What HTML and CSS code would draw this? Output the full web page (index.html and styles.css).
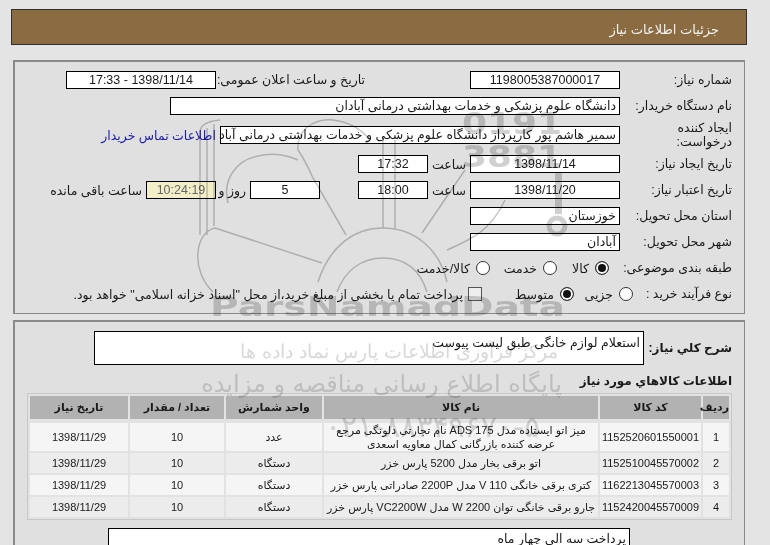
FILE: index.html
```html
<!DOCTYPE html>
<html lang="fa" dir="rtl">
<head>
    <meta charset="UTF-8">
    <title>جزئیات اطلاعات نیاز</title>
    <link rel="stylesheet" href="styles.css">
</head>
<body>
<div class="title-bar">جزئیات اطلاعات نیاز</div>

<div class="panel panel-top">
    <div class="row">
        <div class="label">شماره نیاز:</div>
        <div class="box box-md center">1198005387000017</div>
        <div class="label label-public">تاریخ و ساعت اعلان عمومی:</div>
        <div class="box box-md center">1398/11/14 - 17:33</div>
    </div>
    <div class="row">
        <div class="label">نام دستگاه خریدار:</div>
        <div class="box box-buyer">دانشگاه علوم پزشکی و خدمات بهداشتی درمانی آبادان</div>
    </div>
    <div class="row row-tall">
        <div class="label">ایجاد کننده<br>درخواست:</div>
        <div class="box box-creator">سمیر هاشم پور کارپرداز دانشگاه علوم پزشکی و خدمات بهداشتی درمانی آبادان</div>
        <a class="contact" href="#">اطلاعات تماس خریدار</a>
    </div>
    <div class="row">
        <div class="label">تاریخ ایجاد نیاز:</div>
        <div class="box box-md center">1398/11/14</div>
        <div class="unit">ساعت</div>
        <div class="box box-sm center">17:32</div>
    </div>
    <div class="row">
        <div class="label">تاریخ اعتبار نیاز:</div>
        <div class="box box-md center">1398/11/20</div>
        <div class="unit">ساعت</div>
        <div class="box box-sm center">18:00</div>
        <div class="box box-sm center box-days">5</div>
        <div class="unit unit-days">روز و</div>
        <div class="box box-sm center box-timer">10:24:19</div>
        <div class="remain">ساعت باقی مانده</div>
    </div>
    <div class="row">
        <div class="label">استان محل تحویل:</div>
        <div class="box box-md">خوزستان</div>
    </div>
    <div class="row">
        <div class="label">شهر محل تحویل:</div>
        <div class="box box-md">آبادان</div>
    </div>
    <div class="row">
        <div class="label">طبقه بندی موضوعی:</div>
        <div class="options options-cat">
            <span class="radio checked"></span><span class="opt opt-kala">کالا</span>
            <span class="radio"></span><span class="opt opt-khedmat">خدمت</span>
            <span class="radio"></span><span class="opt">کالا/خدمت</span>
        </div>
    </div>
    <div class="row">
        <div class="label">نوع فرآیند خرید :</div>
        <div class="options options-proc">
            <span class="radio"></span><span class="opt opt-jozi">جزیی</span>
            <span class="radio checked"></span><span class="opt opt-motevaset">متوسط</span>
            <span class="check"></span><span class="opt">پرداخت تمام یا بخشی از مبلغ خرید،از محل "اسناد خزانه اسلامی" خواهد بود.</span>
        </div>
    </div>
</div>

<div class="panel panel-bottom">
    <div class="desc-row">
        <div class="desc-label">شرح کلي نیاز:</div>
        <div class="desc-box">استعلام لوازم خانگی طبق لیست پیوست</div>
    </div>
    <div class="goods-title">اطلاعات کالاهاي مورد نیاز</div>
    <table class="goods">
        <colgroup>
            <col class="c-num"><col class="c-code"><col class="c-name"><col class="c-unit"><col class="c-qty"><col class="c-date">
        </colgroup>
        <thead>
            <tr><th>ردیف</th><th>کد کالا</th><th>نام کالا</th><th>واحد شمارش</th><th>تعداد / مقدار</th><th>تاریخ نیاز</th></tr>
        </thead>
        <tbody>
            <tr class="first"><td>1</td><td>1152520601550001</td><td>میز اتو ایستاده مدل ADS 175 نام تجارتی دلونگی مرجع<br>عرضه کننده بازرگانی کمال معاویه اسعدی</td><td>عدد</td><td>10</td><td>1398/11/29</td></tr>
            <tr><td>2</td><td>1152510045570002</td><td>اتو برقی بخار مدل 5200 پارس خزر</td><td>دستگاه</td><td>10</td><td>1398/11/29</td></tr>
            <tr><td>3</td><td>1162213045570003</td><td>کتری برقی خانگی 110 V مدل 2200P صادراتی پارس خزر</td><td>دستگاه</td><td>10</td><td>1398/11/29</td></tr>
            <tr><td>4</td><td>1152420045570009</td><td>جارو برقی خانگی توان 2200 W مدل VC2200W پارس خزر</td><td>دستگاه</td><td>10</td><td>1398/11/29</td></tr>
        </tbody>
    </table>
    <div class="note-box">پرداخت سه الی چهار ماه</div>
</div>

<!-- watermark over the whole page -->
<svg class="watermark" width="770" height="545" viewBox="0 0 770 545">
    <g fill="none" stroke="#bdbdbd" stroke-width="1.5">
        <path d="M200 235V132Q200 122 220 120M207 235V128M214 226V124"/>
        <path d="M322 263L215 228C195 232 190 270 213 292"/>
        <path d="M346 235L313 178C305 160 298 150 298 150C296 132 312 118 333 120C350 122 362 130 370 140"/>
        <path d="M228 203C222 180 236 160 258 156C275 152 290 156 298 160"/>
        <path d="M318 282C330 245 355 228 383 228C415 228 440 250 447 282"/>
        <path d="M337 292C345 270 362 258 383 258C405 258 420 270 427 292"/>
        <path d="M422 233L465 170M383 228V140M395 228V140"/>
        <path d="M447 250C470 240 490 232 505 200"/>
    </g>
    <g fill="#c8c8c8" direction="ltr">
        <text x="462" y="134" font-size="30" font-weight="700" textLength="100" lengthAdjust="spacingAndGlyphs" class="wm-latin">0191</text>
        <text x="462" y="167" font-size="30" font-weight="700" textLength="100" lengthAdjust="spacingAndGlyphs" class="wm-latin">3881</text>
        <rect x="555" y="172" width="7" height="42"/>
        <circle cx="557" cy="226" r="8" fill="none" stroke="#c8c8c8" stroke-width="5"/>
        <text x="210" y="316" font-size="27" font-weight="700" textLength="355" lengthAdjust="spacingAndGlyphs" class="wm-latin">ParsNamadData</text>
    </g>
    <g fill="#d2d2d2" direction="rtl" text-anchor="start">
        <text x="562" y="392" font-size="24" class="wm-fa">پایگاه اطلاع رسانی مناقصه و مزایده</text>
        <text x="540" y="437" font-size="30" class="wm-fa">۰۲۱-۸۸۳۴۹۶۷۰-۵</text>
        <text x="558" y="358" font-size="19" class="wm-serif">مرکز فرآوری اطلاعات پارس نماد داده ها</text>
    </g>
</svg>
</body>
</html>
```

FILE: styles.css
```css
html, body {
    height: 545px;
    overflow: hidden;
}

body {
    position: relative;
    box-sizing: border-box;
    margin: 0;
    padding: 9px 23px 0;
    background-color: #e4e4e4;
    color: #1a1a1a;
    font-family: "Liberation Sans", "DejaVu Sans", sans-serif;
    font-size: 12.5px;
}

.title-bar {
    height: 34px;
    line-height: 39px;
    padding-right: 27px;
    margin-left: -12px;
    border: 1px solid #2f2f2f;
    background-color: #8b6c42;
    color: #f2f2f2;
    font-size: 13px;
}

.panel {
    margin-right: 2px;
    margin-left: -10px;
    border: 1px solid #8a8a8a;
    border-width: 2px 1px 1px 2px;
    background-color: #e0e0e0;
}

.panel-top {
    margin-top: 15px;
    height: 246px;
    padding: 5px 12px 0 0;
}

.panel-bottom {
    margin-top: 6px;
    height: 214px;
    padding: 9px 12px 0 0;
    border-bottom: 0;
}

.row {
    display: flex;
    align-items: center;
    height: 26px;
}

.row-tall {
    height: 32px;
}

.label {
    width: 112px;
    flex: none;
    line-height: 14px;
}

.label-public {
    width: 149px;
    margin-right: 105px;
}

.box {
    height: 16px;
    line-height: 16px;
    padding: 0 3px;
    flex: none;
    border: 1px solid #000;
    background-color: #fff;
    white-space: nowrap;
    overflow: hidden;
}

.center {
    text-align: center;
}

.box-md {
    width: 142px;
}

.box-sm {
    width: 62px;
}

.box-buyer {
    width: 442px;
}

.box-creator {
    width: 392px;
}

.box-days {
    margin-right: 38px;
}

.box-timer {
    background-color: #f2efc8;
    color: #666;
}

.unit {
    width: 38px;
    padding-right: 4px;
    flex: none;
}

.unit-days {
    width: 30px;
    white-space: nowrap;
}

.remain {
    padding-right: 4px;
}

.contact {
    padding-right: 4px;
    color: #1c1ca8;
    text-decoration: none;
}

.options {
    display: flex;
    align-items: center;
}

.options-cat {
    margin-right: 11px;
}

.options-proc {
    margin-right: -13px;
}

.radio {
    box-sizing: border-box;
    width: 14px;
    height: 14px;
    flex: none;
    border: 1px solid #333;
    border-radius: 50%;
    background-color: #fff;
}

.radio.checked {
    box-shadow: inset 0 0 0 2px #fff;
    background-color: #111;
}

.check {
    box-sizing: border-box;
    width: 14px;
    height: 14px;
    flex: none;
    margin-left: -1px;
    border: 1px solid #555;
    background-color: #eee;
}

.opt {
    box-sizing: border-box;
    padding-right: 6px;
    white-space: nowrap;
}

.opt-kala {
    width: 38px;
}

.opt-khedmat {
    width: 53px;
}

.opt-jozi {
    width: 45px;
}

.opt-motevaset {
    width: 78px;
}

.desc-row {
    display: flex;
    align-items: center;
}

.desc-label {
    width: 88px;
    flex: none;
    font-weight: bold;
    font-size: 12px;
    white-space: nowrap;
}

.desc-box {
    width: 542px;
    height: 32px;
    padding: 0 3px;
    line-height: 22px;
    border: 1px solid #000;
    background-color: #fff;
}

.goods-title {
    margin-top: 8px;
    line-height: 16px;
    font-weight: bold;
    font-size: 12px;
}

.goods {
    width: 705px;
    margin: 4px 0 0;
    table-layout: fixed;
    border-collapse: separate;
    border-spacing: 2px;
    border: 1px solid #c8c8c8;
    background-color: #e2e2e2;
    font-size: 11px;
    text-align: center;
}

.c-num { width: 26px; }
.c-code { width: 101px; }
.c-name { width: 274px; }
.c-unit { width: 96px; }
.c-qty { width: 94px; }
.c-date { width: 98px; }

.goods th {
    height: 23px;
    padding: 0;
    border-bottom: 2px solid #e2e2e2;
    background-color: #b2b2b2;
    background-clip: padding-box;
    font-weight: bold;
}

.goods td {
    height: 20px;
    padding: 0;
    line-height: 14px;
    background-color: #ececec;
    white-space: nowrap;
}

.goods tbody tr:nth-child(odd) td {
    background-color: #f5f5f5;
}

.goods .first td {
    height: 28px;
}

.note-box {
    width: 514px;
    height: 14px;
    margin: 8px 102px 0 0;
    padding: 2px 3px 0;
    line-height: 16px;
    border: 1px solid #000;
    border-bottom: 0;
    background-color: #fff;
}

.watermark {
    position: absolute;
    top: 0;
    left: 0;
    mix-blend-mode: multiply;
    opacity: 0.85;
    pointer-events: none;
}

.wm-latin {
    font-family: "DejaVu Sans", sans-serif;
}

.wm-fa {
    font-family: "DejaVu Sans", sans-serif;
}

.wm-serif {
    font-family: "DejaVu Serif", serif;
}
```
